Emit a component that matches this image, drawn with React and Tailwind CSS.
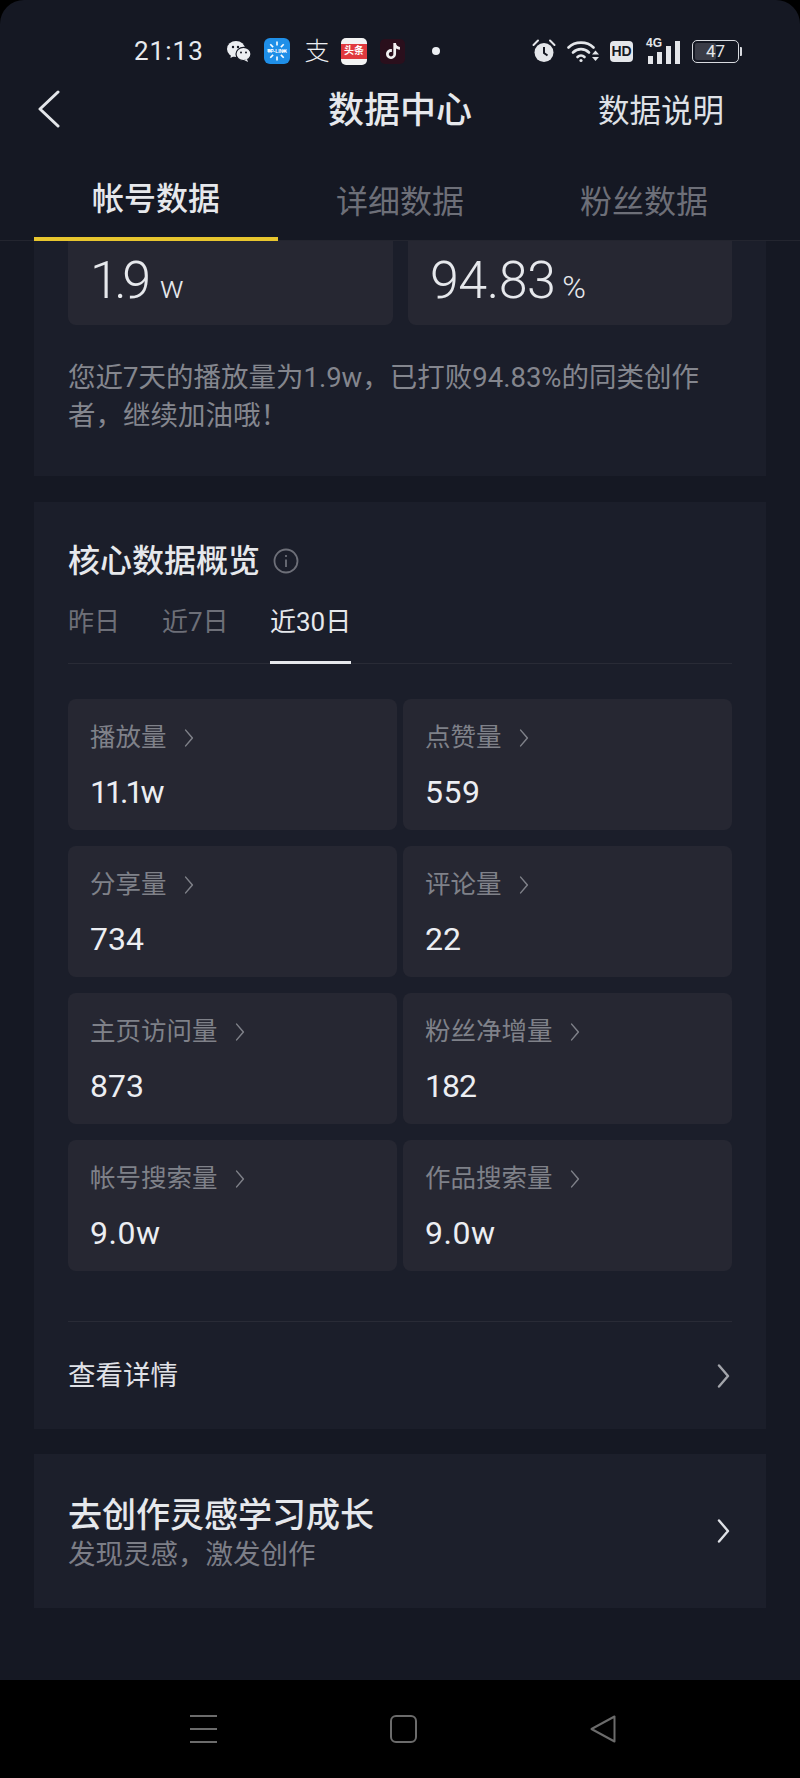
import { SiTiktok } from "react-icons/si";

const CJK = "font-['Roboto','Noto_Sans_CJK_SC',sans-serif]";

const METRICS = [
  ["播放量", "11.1w", "tracking-[-3px]"],
  ["点赞量", "559", "tracking-[0.5px]"],
  ["分享量", "734", ""],
  ["评论量", "22", ""],
  ["主页访问量", "873", ""],
  ["粉丝净增量", "182", "tracking-[-1px]"],
  ["帐号搜索量", "9.0w", "tracking-[0.5px]"],
  ["作品搜索量", "9.0w", "tracking-[0.5px]"],
];

function Chevron({ className, width = 2.4 }) {
  return (
    <svg viewBox="0 0 12 24" className={className} fill="none" stroke="currentColor" strokeWidth={width} strokeLinecap="round" strokeLinejoin="round">
      <path d="M1.5 1.5 L10.5 12 L1.5 22.5" />
    </svg>
  );
}

function WeChatIcon() {
  return (
    <svg viewBox="0 0 24 21" className="h-[21px] w-[24px]" fill="#eceef2">
      <ellipse cx="9" cy="8" rx="9" ry="8" />
      <path d="M4 13 L3.5 17 L8 14.5 Z" />
      <ellipse cx="16.5" cy="13" rx="7.5" ry="6.6" stroke="#151823" strokeWidth="1.2" />
      <path d="M20 18 L21 21 L17 19 Z" />
      <circle cx="6" cy="6" r="1.2" fill="#151823" />
      <circle cx="11" cy="6" r="1.2" fill="#151823" />
      <circle cx="14" cy="11.5" r="1" fill="#151823" />
      <circle cx="19" cy="11.5" r="1" fill="#151823" />
    </svg>
  );
}

function TpLinkIcon() {
  const rays = [0, 45, 90, 135, 180, 225, 270, 315];
  return (
    <div className="relative flex h-[26px] w-[26px] items-center justify-center rounded-[6px] bg-[#1f8fe8]">
      <svg viewBox="0 0 26 26" className="absolute inset-0 h-full w-full">
        {rays.map((r) => (
          <rect key={r} x="12.2" y="3.5" width="1.6" height="4" fill="#fff" transform={`rotate(${r} 13 13)`} />
        ))}
      </svg>
      <span className="relative font-['Liberation_Sans',sans-serif] text-[5px] leading-none font-bold text-white">TP-LINK</span>
    </div>
  );
}

function AlarmIcon() {
  return (
    <svg viewBox="0 0 24 24" className="h-[24px] w-[24px]">
      <path d="M1.5 6 L6 1.5 M22.5 6 L18 1.5" stroke="#e4e6ea" strokeWidth="2" strokeLinecap="round" />
      <circle cx="12" cy="13.5" r="9.5" fill="#e4e6ea" />
      <path d="M12 8 V14 L15.5 16.5" stroke="#151823" strokeWidth="2" fill="none" />
    </svg>
  );
}

function WifiIcon() {
  return (
    <svg viewBox="0 0 32 24" className="h-[24px] w-[32px]" fill="none" stroke="#e4e6ea" strokeWidth="2.6" strokeLinecap="round">
      <path d="M1.5 8.5 C8 2 20 2 26.5 8.5" />
      <path d="M6 13.5 C10.5 9 17.5 9 22 13.5" />
      <path d="M10.5 18 C12.5 16 15.5 16 17.5 18" />
      <circle cx="14" cy="21.5" r="1.6" fill="#e4e6ea" stroke="none" />
      <path d="M25 15.5 L32 15.5 L28.5 11.5 Z M25 18 L32 18 L28.5 22 Z" fill="#e4e6ea" stroke="none" />
    </svg>
  );
}

function SignalIcon() {
  return (
    <div className="relative h-[25px] w-[34px]">
      <span className="absolute top-[-2px] left-0 font-['Liberation_Sans',sans-serif] text-[12px] leading-none font-bold text-[#e4e6ea]">4G</span>
      <div className="absolute inset-0 flex items-end justify-end gap-[4px]">
        <div className="h-[8px] w-[5px] bg-[#e4e6ea]" />
        <div className="h-[12px] w-[5px] bg-[#e4e6ea]" />
        <div className="h-[18px] w-[5px] bg-[#e4e6ea]" />
        <div className="h-[23px] w-[5px] bg-[#e4e6ea]" />
      </div>
    </div>
  );
}

function StatusBar() {
  return (
    <div className="flex h-[30px] items-center pl-[134px]">
      <span className="w-[69px] font-['Roboto',sans-serif] text-[26px] leading-none tracking-[1px] text-[#e8eaee]">21:13</span>
      <div className="ml-[24px]">
        <WeChatIcon />
      </div>
      <div className="ml-[13px]">
        <TpLinkIcon />
      </div>
      <span className="ml-[14px] w-[26px] text-center text-[25px] leading-none font-light text-[#eceef2]">支</span>
      <div className="ml-[11px] flex h-[27px] w-[26px] flex-col items-center justify-center overflow-hidden rounded-[5px] bg-[#f3f3f3]">
        <div className="flex h-[15px] w-full items-center justify-center bg-[#e0393e] text-[10px] leading-none font-bold text-white">头条</div>
      </div>
      <div className="ml-[13px] flex h-[25px] w-[25px] items-center justify-center rounded-[5px] bg-[#2a0f1c]">
        <SiTiktok className="h-[16px] w-[16px] text-[#f2f2f2]" />
      </div>
      <div className="ml-[27px] h-[8px] w-[8px] rounded-full bg-[#eceef2]" />
      <div className="ml-[92px]">
        <AlarmIcon />
      </div>
      <div className="ml-[11px]">
        <WifiIcon />
      </div>
      <div className="ml-[11px] flex h-[21px] w-[23px] items-center justify-center rounded-[4px] bg-[#e4e6ea] font-['Liberation_Sans',sans-serif] text-[14px] leading-none font-bold text-[#151823]">
        HD
      </div>
      <div className="ml-[13px]">
        <SignalIcon />
      </div>
      <div className="relative ml-[12px] flex h-[23px] w-[47px] items-center justify-center overflow-hidden rounded-[5px] border-[1.5px] border-[#d8dadf]">
        <div className="absolute top-[2px] bottom-[2px] left-[2px] w-[21px] rounded-[2px] bg-[#3a3c47]" />
        <span className="relative font-['Roboto',sans-serif] text-[17px] leading-none text-[#e4e6ea]">47</span>
      </div>
      <div className="ml-[1px] h-[9px] w-[2px] rounded-r-[1px] bg-[#d8dadf]" />
    </div>
  );
}

function TopBar() {
  return (
    <div className="relative flex h-[88px] items-center justify-center">
      <svg viewBox="0 0 22 38" className="absolute top-[24px] left-[38px] h-[38px] w-[22px]" fill="none" stroke="#e4e6ea" strokeWidth="3" strokeLinecap="round" strokeLinejoin="round">
        <path d="M20 2 L2 19 L20 36" />
      </svg>
      <span className="pt-[2px] text-[36px] leading-none font-medium text-[#e6e8ec]">数据中心</span>
      <span className="absolute top-[30px] left-[598px] text-[31.5px] leading-none text-[#dfe1e6]">数据说明</span>
    </div>
  );
}

function MainTabs() {
  return (
    <div className="flex h-[87px] border-b border-[#23252f] px-[34px]">
      <div className="-mb-[1px] flex w-[244px] items-center justify-center border-b-[4px] border-[#e8c62e] pt-[7px] text-[32px] leading-none font-medium text-[#e6e8ec]">
        帐号数据
      </div>
      <div className="flex w-[244px] items-center justify-center pt-[9px] text-[32px] leading-none text-[#6d6f78]">详细数据</div>
      <div className="flex w-[244px] items-center justify-center pt-[9px] text-[32px] leading-none text-[#6d6f78]">粉丝数据</div>
    </div>
  );
}

function Summary() {
  return (
    <section className="mx-[34px] h-[235px] bg-[#1b1e2a] px-[34px]">
      <div className="flex gap-[15px]">
        <div className="flex h-[84px] w-[325px] items-baseline rounded-b-[8px] bg-[#262732] pt-[8px] pl-[22px] text-[#e6e8ec]">
          <span className="text-[52px] leading-[64px] font-light tracking-[-4.5px]">1.9</span>
          <span className="ml-[13px] text-[32px] leading-none font-light">w</span>
        </div>
        <div className="flex h-[84px] w-[324px] items-baseline rounded-b-[8px] bg-[#262732] pt-[8px] pl-[22px] text-[#e6e8ec]">
          <span className="text-[52px] leading-[64px] font-light tracking-[-0.5px]">94.83</span>
          <span className="ml-[7px] text-[32px] leading-none font-light">%</span>
        </div>
      </div>
      <p className="mt-[34px] w-[664px] text-[27.5px] leading-[38px] text-[#84868e]">
        您近7天的播放量为1.9w，已打败94.83%的同类创作者，继续加油哦！
      </p>
    </section>
  );
}

function MetricCard({ label, value, tight }) {
  return (
    <div className="h-[131px] rounded-[8px] bg-[#262732] pt-[24px] pl-[22px]">
      <div className="flex h-[30px] items-center text-[25.5px] leading-none text-[#7f8189]">
        <span>{label}</span>
        <Chevron className="ml-[17px] h-[18px] w-[10px] text-[#7f8189]" width={2} />
      </div>
      <div className={`mt-[23px] text-[32px] leading-none text-[#eceef2] ${tight}`}>{value}</div>
    </div>
  );
}

function Overview() {
  return (
    <section className="mx-[34px] mt-[26px] h-[927px] bg-[#1b1e2a] px-[34px] pt-[41px]">
      <div className="flex h-[36px] items-center">
        <h2 className="text-[32px] leading-none font-medium text-[#e6e8ec]">核心数据概览</h2>
        <svg viewBox="0 0 26 26" className="ml-[13px] h-[26px] w-[26px]" fill="none" stroke="#6d6f78" strokeWidth="1.8">
          <circle cx="13" cy="13" r="11.5" />
          <path d="M13 11.5 V19 M13 7 V9" />
        </svg>
      </div>
      <div className="mt-[22px] flex h-[63px] border-b border-[#292b36] text-[26px] leading-none whitespace-nowrap text-[#6d6f78]">
        <div className="w-[94px] pt-[8px]">昨日</div>
        <div className="w-[108px] pt-[8px]">近7日</div>
        <div className="-mb-[1px] h-[63px] w-[81px] border-b-[3px] border-[#e6e8ec] pt-[8px] text-[#e6e8ec]">近30日</div>
      </div>
      <div className="mt-[35px] grid grid-cols-[329px_329px] gap-x-[6px] gap-y-[16px]">
        {METRICS.map(([label, value, tight]) => (
          <MetricCard key={label} label={label} value={value} tight={tight} />
        ))}
      </div>
      <div className="mt-[50px] flex h-[108px] items-center justify-between border-t border-[#292b36] text-[27.5px] leading-none text-[#e0e2e7]">
        <span>查看详情</span>
        <Chevron className="mr-[2px] h-[24px] w-[13px] text-[#a3a5ab]" />
      </div>
    </section>
  );
}

function Growth() {
  return (
    <section className="mx-[34px] mt-[25px] flex h-[154px] items-center justify-between bg-[#1c1f2b] px-[34px]">
      <div className="pt-[5px]">
        <div className="text-[34px] leading-[38px] font-medium text-[#e6e8ec]">去创作灵感学习成长</div>
        <div className="mt-[5px] text-[27.5px] leading-[32px] text-[#7c7e87]">发现灵感，激发创作</div>
      </div>
      <Chevron className="mr-[2px] h-[24px] w-[13px] text-[#dfe1e6]" />
    </section>
  );
}

function NavBar() {
  return (
    <div className="flex h-[98px] items-start bg-black pt-[35px] pl-[190px]">
      <div className="flex h-[28px] w-[27px] flex-col justify-between">
        <div className="h-[2px] bg-[#6b6b6b]" />
        <div className="h-[2px] bg-[#6b6b6b]" />
        <div className="h-[2px] bg-[#6b6b6b]" />
      </div>
      <div className="ml-[173px] h-[28px] w-[27px] rounded-[6px] border-2 border-[#6b6b6b]" />
      <svg viewBox="0 0 26 28" className="ml-[173px] h-[28px] w-[26px]" fill="none" stroke="#6b6b6b" strokeWidth="2" strokeLinejoin="round">
        <path d="M24.5 1.5 V26.5 L1.5 14 Z" />
      </svg>
    </div>
  );
}

export default function App() {
  return (
    <div className={`flex h-[1778px] w-[800px] flex-col overflow-hidden bg-black ${CJK}`}>
      <div className="flex min-h-0 flex-1 flex-col rounded-t-[24px] bg-[#151823]">
        <div className="pt-[36px]">
          <StatusBar />
          <TopBar />
          <MainTabs />
        </div>
        <Summary />
        <Overview />
        <Growth />
      </div>
      <NavBar />
    </div>
  );
}
